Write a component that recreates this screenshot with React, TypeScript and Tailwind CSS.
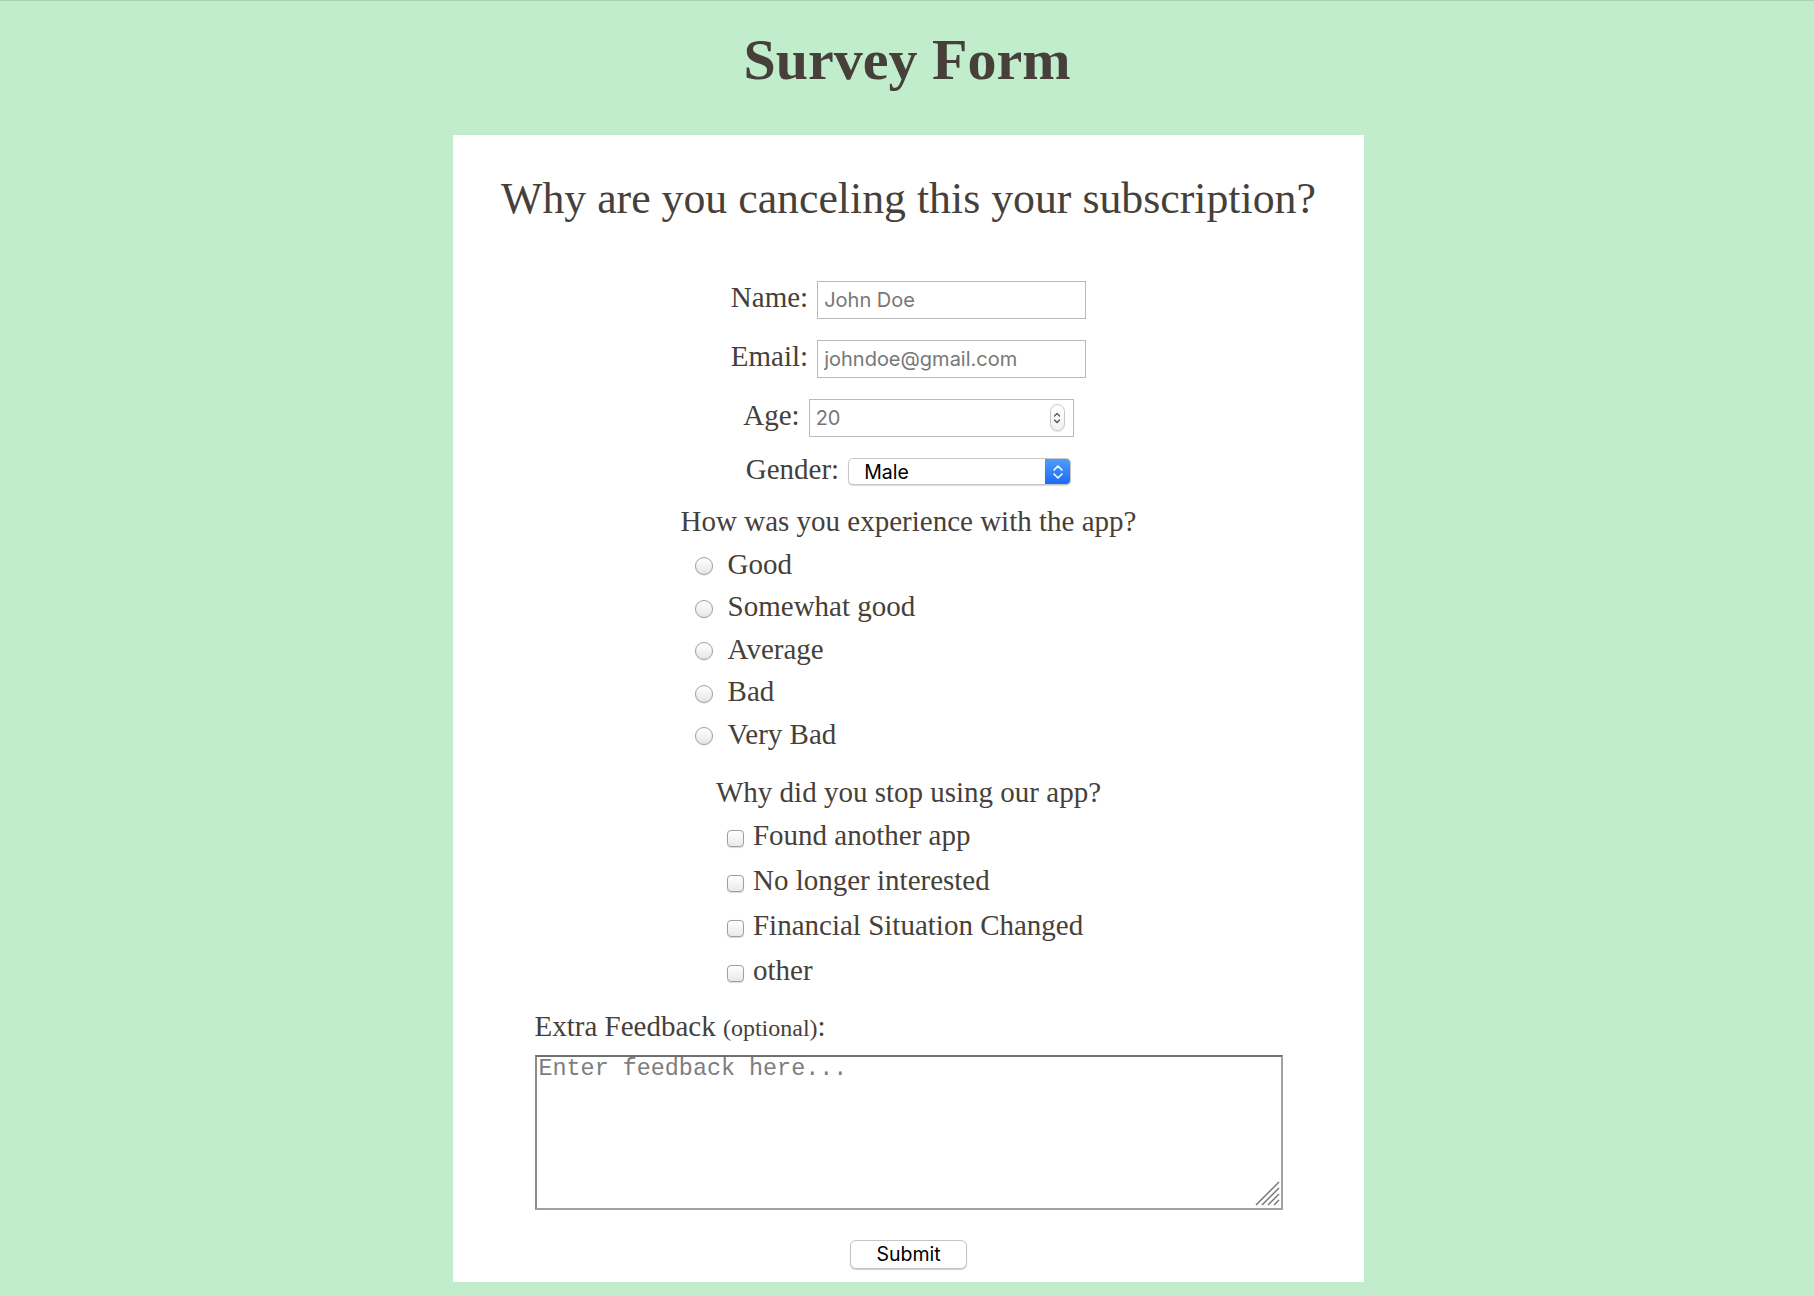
import React from "react";

const radios = ["Good", "Somewhat good", "Average", "Bad", "Very Bad"];
const checks = [
  "Found another app",
  "No longer interested",
  "Financial Situation Changed",
  "other",
];

function SpinChevrons() {
  return (
    <svg width="10" height="18" viewBox="0 0 10 18">
      <path d="M2.5 7 L5 4.5 L7.5 7" fill="none" stroke="#555555" strokeWidth="1.3" strokeLinecap="round" strokeLinejoin="round" />
      <path d="M2.5 11 L5 13.5 L7.5 11" fill="none" stroke="#555555" strokeWidth="1.3" strokeLinecap="round" strokeLinejoin="round" />
    </svg>
  );
}

function SelectChevrons() {
  return (
    <svg width="12" height="16" viewBox="0 0 12 16">
      <path d="M2 6 L6 2 L10 6" fill="none" stroke="#ffffff" strokeWidth="1.6" strokeLinecap="round" strokeLinejoin="round" />
      <path d="M2 10 L6 14 L10 10" fill="none" stroke="#ffffff" strokeWidth="1.6" strokeLinecap="round" strokeLinejoin="round" />
    </svg>
  );
}

function Row({ label, children, tight }: { label: string; children: React.ReactNode; tight?: boolean }) {
  return (
    <div className="flex items-baseline gap-[9px]">
      <label className={tight ? "text-[29px] leading-[20px]" : "text-[29px] leading-[28px]"}>{label}</label>
      {children}
    </div>
  );
}

export default function App() {
  return (
    <div className="min-h-[1296px] bg-[#c1edcc] border-t border-[#a9d3b3] text-[#463f3a] font-['Liberation_Serif','Times_New_Roman',serif] flex flex-col items-center">
      <h1 className="text-[58px] leading-[66px] font-bold pt-[26px] mb-[42px]">Survey Form</h1>
      <form className="w-[911px] ml-[3px] bg-white flex flex-col items-center pt-[38px] pb-[13px]">
        <h2 className="text-[43.8px] leading-[50px]">Why are you canceling this your subscription?</h2>

        <div className="mt-[58px] flex flex-col items-center gap-[21px]">
          <Row label="Name:">
            <input
              readOnly
              placeholder="John Doe"
              className="h-[38px] w-[269px] border border-[#b9b9b9] px-[6px] text-[20px] font-['Inter',sans-serif] text-black placeholder:text-[#777777] outline-none"
            />
          </Row>
          <Row label="Email:">
            <input
              readOnly
              placeholder="johndoe@gmail.com"
              className="h-[38px] w-[269px] border border-[#b9b9b9] px-[6px] text-[20px] font-['Inter',sans-serif] text-black placeholder:text-[#777777] outline-none"
            />
          </Row>
          <Row label="Age:">
            <div className="relative">
              <input
                readOnly
                placeholder="20"
                className="h-[38px] w-[265px] border border-[#b9b9b9] px-[6px] text-[20px] font-['Inter',sans-serif] text-black placeholder:text-[#777777] outline-none"
              />
              <span className="absolute right-[9px] top-[5px] w-[15px] h-[27px] rounded-full border border-[#c6c6c6] bg-linear-to-b from-white to-[#f2f2f2] shadow-[0_1px_1px_rgba(0,0,0,0.12)] flex items-center justify-center">
                <SpinChevrons />
              </span>
            </div>
          </Row>
          <Row label="Gender:" tight>
            <div className="flex h-[27px] w-[223px] rounded-[5px] border border-[#c6c6c6] bg-white shadow-[0_1px_1px_rgba(0,0,0,0.15)] overflow-hidden font-['Inter',sans-serif]">
              <span className="flex-1 pl-[15px] text-[19.5px] leading-[26px] text-black">Male</span>
              <span className="w-[25px] bg-linear-to-b from-[#4f9cfb] to-[#196bf3] flex items-center justify-center">
                <SelectChevrons />
              </span>
            </div>
          </Row>
        </div>

        <div className="mt-[15px] w-fit flex flex-col">
          <div className="text-[29px] leading-[42.5px]">How was you experience with the app?</div>
          <div className="flex flex-col pl-[14px]">
            {radios.map((r) => (
              <label key={r} className="flex items-start gap-[15px] h-[42.5px]">
                <input
                  type="radio"
                  name="exp"
                  className="appearance-none mt-[14.5px] w-[18px] h-[18px] rounded-full border border-[#a0a0a0] bg-linear-to-b from-white to-[#e6e6e6] shadow-[0_0.5px_1px_rgba(0,0,0,0.15)] shrink-0"
                />
                <span className="text-[29px] leading-[42.5px]">{r}</span>
              </label>
            ))}
          </div>
        </div>

        <div className="mt-[18px] w-fit flex flex-col">
          <div className="text-[29px] leading-[38px]">Why did you stop using our app?</div>
          <div className="flex flex-col pl-[11px] pt-[1.5px]">
            {checks.map((c) => (
              <label key={c} className="flex items-start gap-[9px] h-[45px]">
                <input
                  type="checkbox"
                  className="appearance-none mt-[17px] w-[17px] h-[17px] rounded-[4px] border border-[#9f9f9f] bg-linear-to-b from-white to-[#e9e9e9] shadow-[0_0.5px_1px_rgba(0,0,0,0.15)] shrink-0"
                />
                <span className="text-[29px] leading-[45px]">{c}</span>
              </label>
            ))}
          </div>
        </div>

        <div className="mt-[15px] w-[748px] flex flex-col">
          <label className="text-[29px] leading-[36px]">
            Extra Feedback <span className="text-[24px] leading-[20px]">(optional)</span>:
          </label>
          <div className="relative mt-[11px]">
            <textarea
              readOnly
              placeholder="Enter feedback here..."
              className="block w-[748px] h-[155px] resize-none border-2 border-t-[#6f6f6f] border-l-[#8c8c8c] border-r-[#a2a2a2] border-b-[#a2a2a2] px-[2px] py-0 font-['Liberation_Mono','Courier_New',monospace] text-[23.4px] leading-[25px] text-black placeholder:text-[#7d7d7d] outline-none"
            />
            <svg width="25" height="25" viewBox="0 0 25 25" className="absolute right-[3px] bottom-[4px]">
              <path d="M1 24 L24 1 M7 24 L24 7 M13 24 L24 13 M19 24 L24 19" stroke="#777777" strokeWidth="1.5" />
            </svg>
          </div>
        </div>

        <button
          type="button"
          className="mt-[30px] w-[117px] h-[29px] rounded-[6px] border border-[#c4c4c4] bg-white shadow-[0_1px_1px_rgba(0,0,0,0.2)] text-[19.5px] leading-[26px] text-black font-['Inter',sans-serif]"
        >
          Submit
        </button>
      </form>
    </div>
  );
}
